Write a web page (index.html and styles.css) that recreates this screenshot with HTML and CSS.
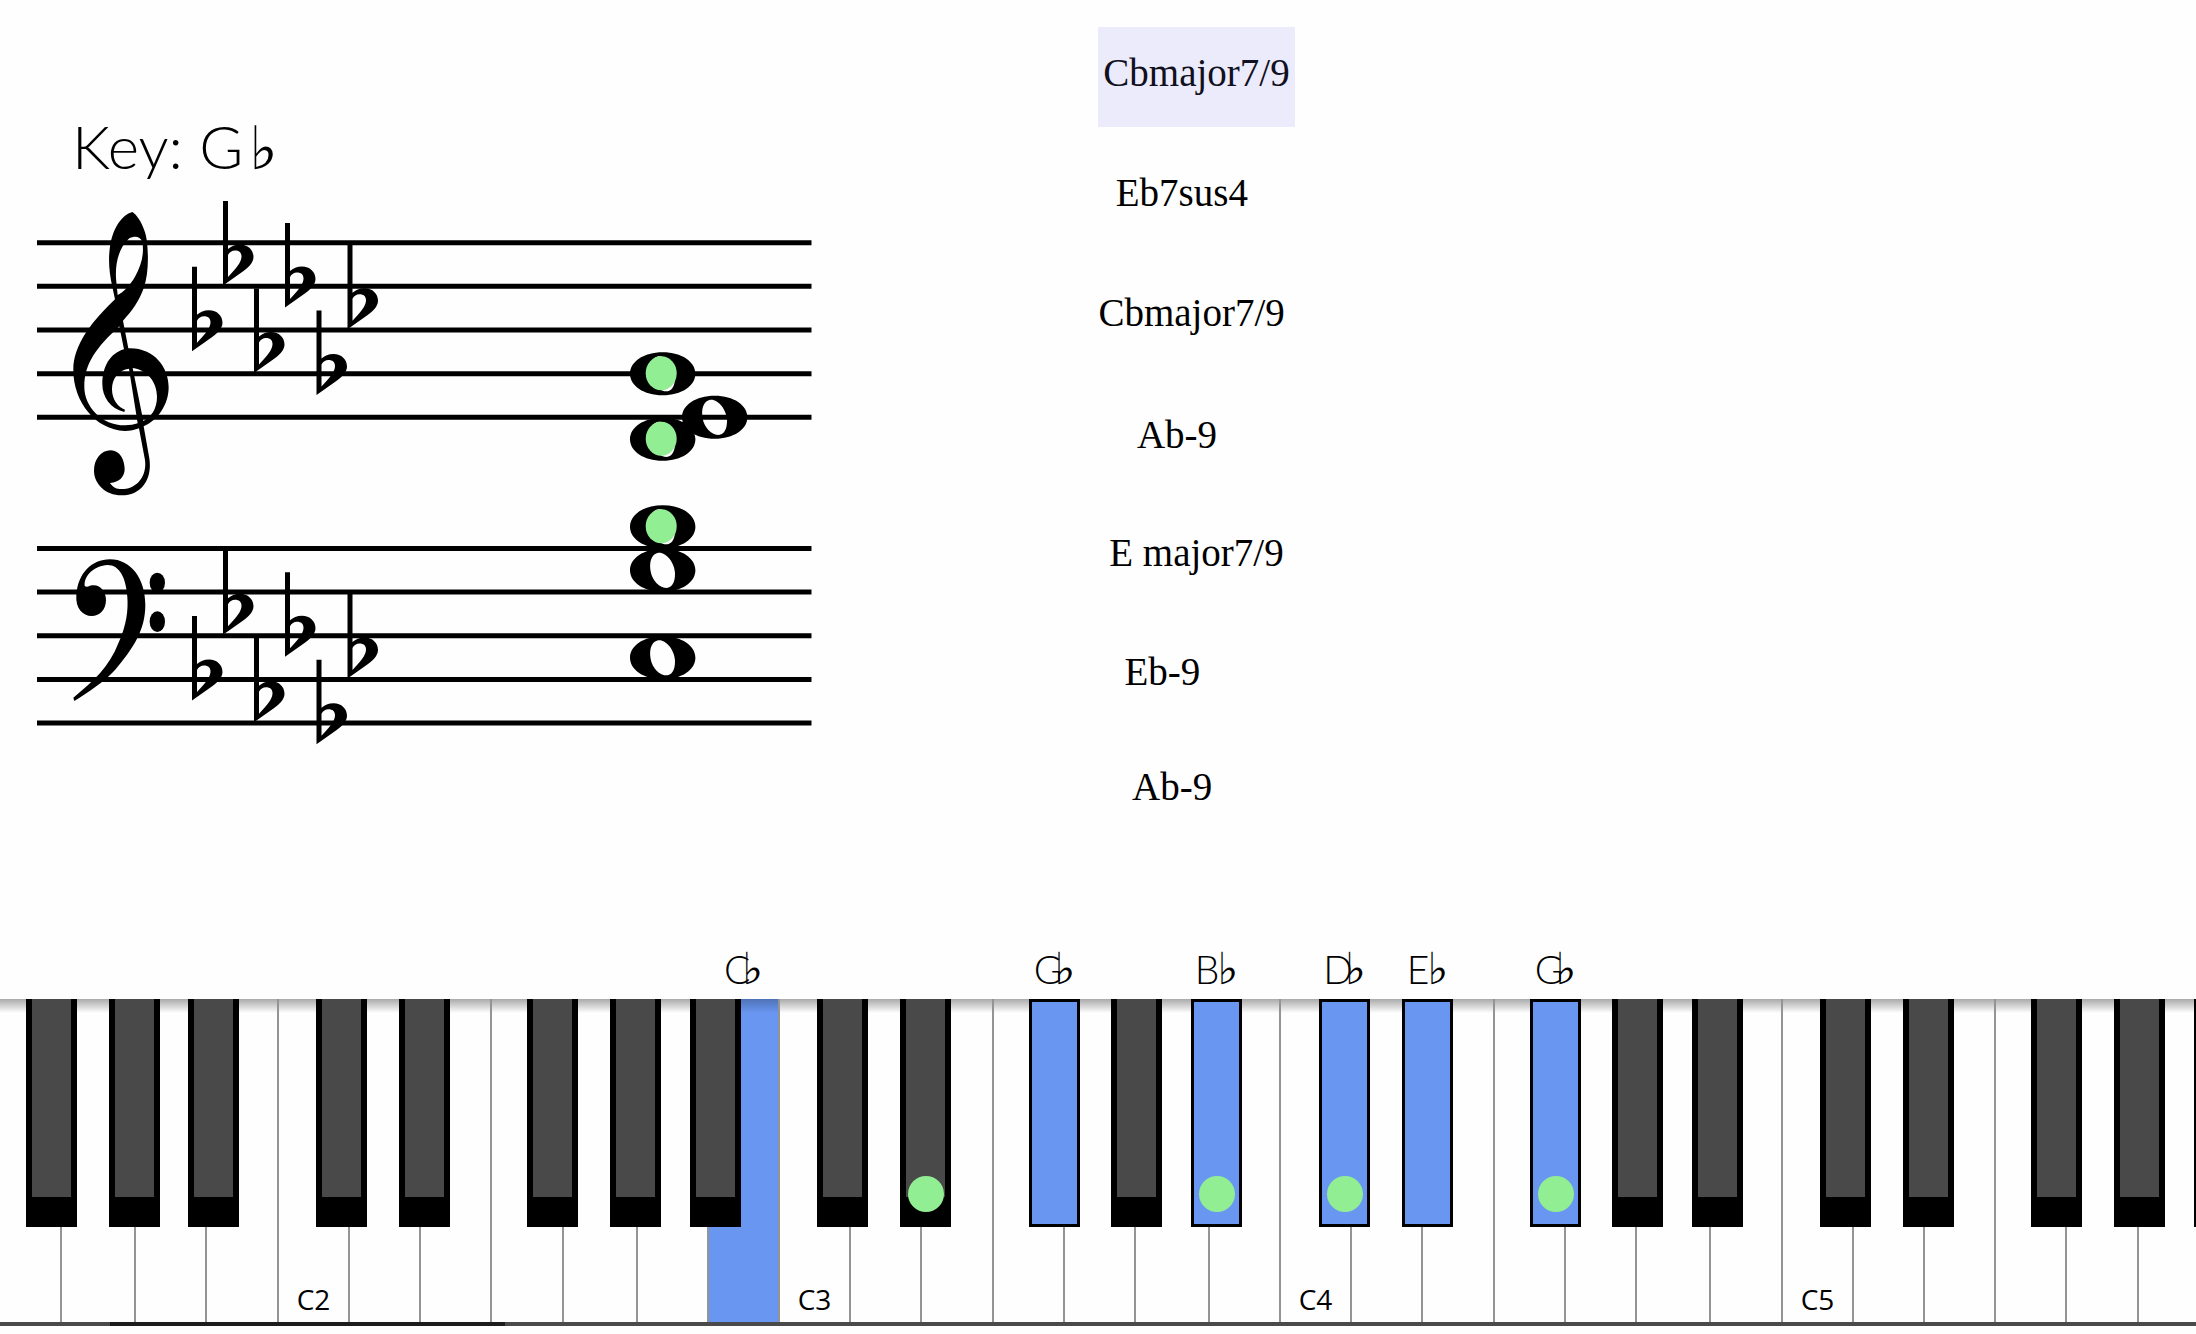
FILE: index.html
```html
<!DOCTYPE html>
<html lang="en">
<head>
  <meta charset="UTF-8" />
  <meta name="viewport" content="width=device-width, initial-scale=1">
  <title>Chord Practice</title>
  <link rel="stylesheet" href="styles.css">
</head>
<body>
  <main class="sheet">
    <section class="score">
      <h1 class="key-name">Key: G<span class="flat">♭</span></h1>
      <svg class="staves" viewBox="0 0 1098 580" role="img" aria-label="Grand staff">
        <defs>
          <path id="flat" fill-rule="evenodd" d="M0 0H5V48C8 45.500 12 43.500 17 43.500C25 43.500 30.500 49 30.500 56C30.500 62 25 67 17 72.500L0 84.500ZM5 54V76L10 70.500C15 65 18.500 60 18.500 55.500C18.500 51.500 16 49.500 12 49.500C9 49.500 6.500 51 5 54Z"/>
          <path id="note" fill-rule="evenodd" d="M-32.700 0C-32.700 -12 -19 -21.500 0 -21.500C19 -21.500 32.700 -12 32.700 0C32.700 12 19 21.500 0 21.500C-19 21.500 -32.700 12 -32.700 0ZM-4.500 -17.500C-10.500 -16.500 -13 -10 -12.500 -2C-12 7 -6 16 1.500 17.500C8 18.500 12.500 14 12.300 3C12 -8 3 -18.500 -4.500 -17.500Z"/>
          <ellipse id="hit" cx="-1.500" cy="-0.500" rx="15.500" ry="17"/>
          <g id="signature">
            <use href="#flat" x="192" y="76.700"/>
            <use href="#flat" x="223" y="11"/>
            <use href="#flat" x="254" y="98.500"/>
            <use href="#flat" x="285" y="33"/>
            <use href="#flat" x="316.500" y="120.500"/>
            <use href="#flat" x="347.500" y="54.700"/>
          </g>
          <path id="lines" d="M37 52.700H811.500M37 96.300H811.500M37 140H811.500M37 183.700H811.500M37 227.300H811.500"/>
        </defs>

        <!-- staff lines and key signature -->
        <g class="staff-lines">
          <use href="#lines"/>
          <use href="#lines" y="305.700"/>
        </g>
        <use href="#signature"/>
        <use href="#signature" y="349.300"/>

        <!-- treble clef -->
        <path transform="translate(20 -90) scale(.3333)" fill-rule="evenodd" d="M337 336C354 345 378 388 381 425C386 475 385 525 371 565C358 602 335 635 309 662L325 745C400 742 446 800 446 862C446 915 412 962 371 979L388 1075C397 1130 370 1186 305 1186C255 1186 222 1150 222 1112C222 1078 243 1051 272 1051C300 1051 314 1080 314 1107C314 1130 298 1147 270 1149C280 1165 295 1169 312 1167C355 1163 381 1125 375 1080L357 985C345 990 330 993 315 993C225 989 160 905 160 810C160 735 215 665 285 598L277 560C268 520 264 480 270 440C278 385 305 345 337 336ZM328 415C345 407 360 409 367 425C373 460 365 495 345 530C330 556 311 576 293 585L289 545C284 500 293 445 328 415ZM298 679C230 742 193 790 193 860C193 920 245 976 315 976C330 976 343 974 353 970L327 806C295 810 276 835 276 868C276 900 295 922 315 929L313 936C270 926 247 890 247 853C247 800 270 760 312 748ZM338 804C385 810 411 850 411 890C411 925 395 950 370 963Z"/>

        <!-- bass clef -->
        <g transform="translate(20 310) scale(.3333)">
          <path d="M169 285C174 220 215 178 270 178C332 178 376 235 376 315C376 390 340 445 285 510C248 550 205 576 163 603L160 593C220 545 268 500 295 430C320 375 325 330 322 290C318 235 300 195 262 195C225 197 192 225 194 257C198 262 203 260 210 257C240 249 258 275 258 300C258 328 240 348 215 348C188 348 166 325 169 285Z"/>
          <ellipse cx="412" cy="248" rx="23" ry="30"/>
          <ellipse cx="412" cy="365" rx="23" ry="31"/>
        </g>

        <!-- chord, top note first -->
        <use href="#note" x="662.700" y="183.700"/>
        <use href="#note" x="714.700" y="227.300"/>
        <use href="#note" x="662.700" y="249.300"/>
        <use href="#note" x="662.700" y="336.700"/>
        <use href="#note" x="662.700" y="380.300"/>
        <use href="#note" x="662.700" y="467.700"/>
        <g class="hits">
          <use href="#hit" x="662.700" y="183.700"/>
          <use href="#hit" x="662.700" y="249.300"/>
          <use href="#hit" x="662.700" y="336.700"/>
        </g>
      </svg>
    </section>

    <!-- names are padded with spaces, the list keeps them -->
    <ol class="chords">
      <li class="current">Cbmajor7/9</li>
      <li>Eb7sus4   </li>
      <li>Cbmajor7/9 </li>
      <li>Ab-9    </li>
      <li>E major7/9</li>
      <li>Eb-9       </li>
      <li>Ab-9     </li>
    </ol>
  </main>

  <div class="keyboard" id="keyboard"></div>

  <script src="keyboard.js"></script>
</body>
</html>
```
FILE: styles.css
```css
body {
  margin: 0;
  min-height: 100vh;
  display: flex;
  flex-direction: column;
  background-color: #fefefe;
  color: #000;
  font-family: Lato, "Open Sans", sans-serif;
  overflow-x: hidden;
}
.sheet {
  flex: 1;
  display: grid;
  grid-template-columns: 1fr 1fr;
}

/* Score */
.score {
  padding-top: 106px;
}
.key-name {
  margin: 0 0 4px;
  padding-left: 72px;
  height: 80px;
  line-height: 80px;
  font-size: 60px;
  font-weight: 300;
}
.flat {
  font-family: "DejaVu Sans", sans-serif;
  font-weight: 700;
}
.key-name .flat {
  margin-left: 6px;
}
.staves {
  display: block;
  width: 100%;
}
.staff-lines {
  stroke: #000;
  stroke-width: 5;
}
.hits {
  fill: #92ee92;
}

/* Chord list */
.chords {
  margin: 0;
  padding: 27px 0 0;
  width: 197px;
  display: grid;
  grid-template-rows: 120px 120px 122px 118px 119px 115px 100px;
  list-style: none;
  font-family: "Liberation Serif", serif;
  font-size: 39px;
}
.chords li {
  height: 100px;
  line-height: 92px;
  display: flex;
  justify-content: center;
  white-space: pre;
}
.chords .current {
  background-color: #ecebfb;
  color: #101020;
}

/* Keyboard */
.keyboard {
  position: relative;
  display: flex;
  height: 323px;
  margin-bottom: 8px;
  border-bottom: 4px solid #4a4a4a;
}
/* darker strip under the lowest keys */
.keyboard::after {
  content: "";
  position: absolute;
  left: 5%;
  top: 100%;
  width: 18%;
  height: 4px;
  background-color: #1c1c1c;
}
.white {
  position: relative;
  box-sizing: border-box;
  border-right: 2px solid #949494;
  background: linear-gradient(#aaa, #fefefe00 14px) #fefefe;
}
.white.on {
  background: linear-gradient(#4f73b8, #6896f000 14px) #6896f0;
}
.black {
  position: absolute;
  top: 0;
  box-sizing: border-box;
  height: 228px;
  border: solid #000;
  border-width: 0 6px 30px;
  background-color: #494949;
}
.black.on {
  border: none;
  box-shadow: inset 0 0 0 3px #000;
  background-color: #6896f0;
}
.dot {
  position: absolute;
  left: 50%;
  top: 177px;
  width: 36px;
  height: 36px;
  margin-left: -18px;
  border-radius: 50%;
  background-color: #92ee92;
}
.octave {
  position: absolute;
  left: 0;
  right: 0;
  bottom: 4px;
  text-align: center;
  font-family: "Open Sans", sans-serif;
  font-size: 28px;
}
.note-name {
  position: absolute;
  left: 50%;
  bottom: 100%;
  transform: translateX(-50%);
  line-height: 60px;
  font-size: 39px;
  font-weight: 300;
  white-space: nowrap;
}
.note-name .flat {
  margin-left: -2px;
  font-size: 44px;
  line-height: 1;
}
/* the flat tucks into the wide letters */
.note-name.wide .flat {
  margin-left: -8px;
}
```
FILE: keyboard.js
```js
// key edges on a 2196 wide board
const BOARD = 2196;
const whiteEdges = [
  0, 62, 136, 207, 279, 350, 421, 492, 564, 638, 709, 780, 851, 922, 994, 1065,
  1136, 1210, 1281, 1352, 1423, 1495, 1566, 1637, 1711, 1783, 1854, 1925, 1996,
  2067, 2139, 2213
];
const blackStarts = [
  26, 109, 188, 316, 399, 527, 610, 690, 817, 900, 1029, 1111, 1191, 1319, 1402,
  1530, 1612, 1692, 1820, 1903, 2031, 2114, 2194
];
const octaves = { 4: 'C2', 11: 'C3', 18: 'C4', 25: 'C5' };
const names = { 1029: 'G', 1191: 'B', 1319: 'D', 1402: 'E', 1530: 'G' };
const dots = [900, 1191, 1319, 1530];

const keyboard = document.getElementById('keyboard');

function addKey(type, start, width) {
  const key = document.createElement('div');
  key.className = type;
  key.style.width = width / BOARD * 100 + '%';
  if (type === 'black') {
    key.style.left = start / BOARD * 100 + '%';
  } else {
    key.style.flex = 'none';
  }
  keyboard.appendChild(key);
  return key;
}

function addName(key, letter) {
  const wide = 'CDG'.includes(letter) ? ' wide' : '';
  key.classList.add('on');
  key.innerHTML += `<span class="note-name${wide}">${letter}<span class="flat">♭</span></span>`;
}

for (let i = 0; i < whiteEdges.length - 1; i++) {
  const key = addKey('white', whiteEdges[i], whiteEdges[i + 1] - whiteEdges[i]);
  if (octaves[i]) {
    key.innerHTML = `<span class="octave">${octaves[i]}</span>`;
  }
  if (i === 10) {
    addName(key, 'C');
  }
}

blackStarts.forEach(start => {
  const key = addKey('black', start, 51);
  if (names[start]) addName(key, names[start]);
  if (dots.includes(start)) key.innerHTML += '<span class="dot"></span>';
});
```
